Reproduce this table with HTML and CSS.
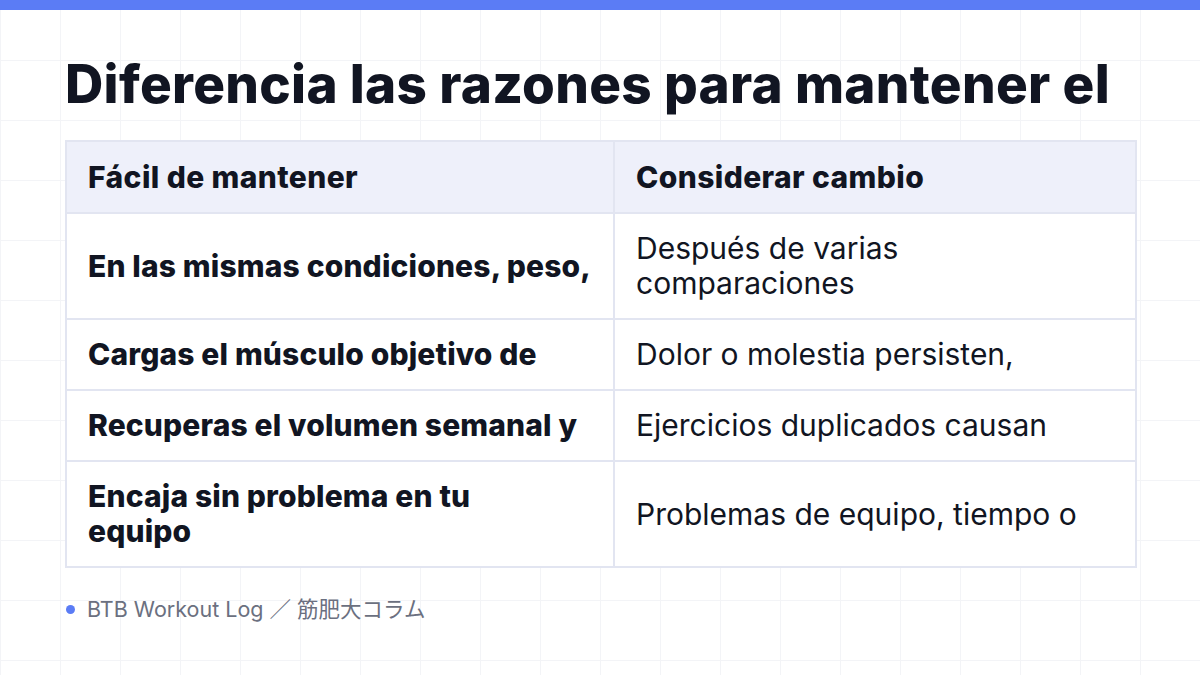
FILE: index.html
```html
<!DOCTYPE html>
<html lang="es">
<head>
<meta charset="utf-8">
<link rel="stylesheet" href="styles.css">
</head>
<body>
<div class="topbar"></div>
<main class="slide">
  <h1 class="title">Diferencia las razones para mantener el</h1>
  <table class="compare">
    <colgroup><col class="c1"><col class="c2"></colgroup>
    <thead>
      <tr><th>Fácil de mantener</th><th>Considerar cambio</th></tr>
    </thead>
    <tbody>
      <tr><td class="keep">En las mismas condiciones, peso,</td><td>Después de varias comparaciones</td></tr>
      <tr><td class="keep">Cargas el músculo objetivo de</td><td>Dolor o molestia persisten,</td></tr>
      <tr><td class="keep">Recuperas el volumen semanal y</td><td>Ejercicios duplicados causan</td></tr>
      <tr><td class="keep">Encaja sin problema en tu<br>equipo</td><td>Problemas de equipo, tiempo o</td></tr>
    </tbody>
  </table>
  <footer class="foot"><span class="dot"></span><span>BTB Workout Log ／ 筋肥大コラム</span></footer>
</main>
</body>
</html>
```
FILE: styles.css
```css
html, body { margin: 0; padding: 0; }
body {
  width: 1200px; height: 675px; overflow: hidden;
  background-color: #ffffff;
  background-image:
    linear-gradient(to right, #f3f4f7 1px, transparent 1px),
    linear-gradient(to bottom, #f3f4f7 1px, transparent 1px);
  background-size: 60px 60px;
  background-position: 0 0;
  font-family: Inter, "Noto Sans", "Noto Sans CJK JP", sans-serif;
  color: #111522;
}
.topbar { height: 10px; background: #5b7cf5; }
.slide { padding: 0 65px; }
.title {
  margin: 0; padding-top: 42px;
  font-size: 53px; font-weight: 800; letter-spacing: 0.3px;
  line-height: 64px; white-space: nowrap;
}
.compare {
  margin-top: 24px;
  width: 1070px; border-collapse: collapse; table-layout: fixed;
  font-size: 30px; line-height: 35px;
}
.compare .c1 { width: 548px; }
.compare .c2 { width: 522px; }
.compare th, .compare td {
  border: 2px solid #e2e5f1; text-align: left; vertical-align: middle;
  padding: 17px 21px;
}
.compare th { background: #eef0fa; font-weight: 800; letter-spacing: 0.4px; padding-top: 17.5px; padding-bottom: 17.5px; }
.compare td { background: #ffffff; font-weight: 400; }
.compare td.keep { font-weight: 800; letter-spacing: 0.15px; }
.foot {
  display: flex; align-items: center; gap: 12px;
  margin-top: 29px;
  font-size: 21.5px; line-height: 25px; color: #6b7080;
}
.dot { width: 9px; height: 9px; border-radius: 50%; background: #5b7cf5; margin-left: 1px; }
```
